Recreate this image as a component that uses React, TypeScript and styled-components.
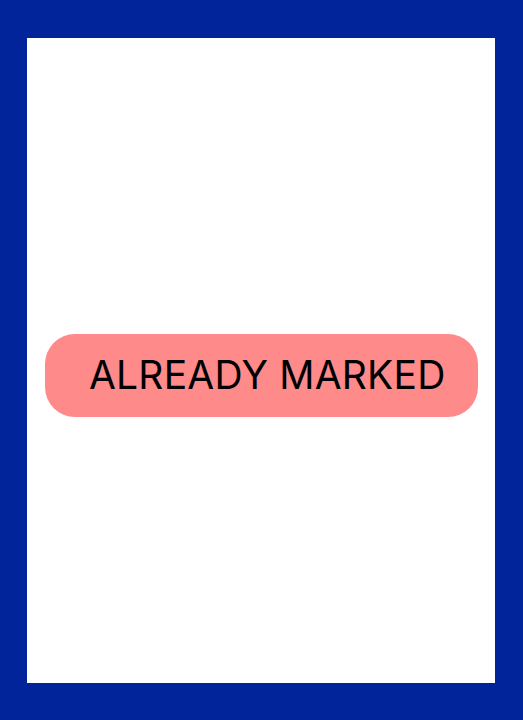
import React from "react";
import styled, { createGlobalStyle } from "styled-components";

const Global = createGlobalStyle`
  html, body { margin: 0; padding: 0; }
  body { background: #02249a; font-family: Inter, "Noto Sans", sans-serif; }
`;

const Frame = styled.div`
  box-sizing: border-box;
  width: 523px;
  height: 720px;
  padding: 38px 28px 37px 27px;
  background: #02249a;
`;

const Panel = styled.div`
  box-sizing: border-box;
  height: 100%;
  background: #ffffff;
  padding: 296px 17px 0 18px;
`;

const Pill = styled.div`
  box-sizing: border-box;
  height: 83px;
  border-radius: 30px;
  background: #ff8a8a;
  display: flex;
  align-items: center;
  padding-left: 44px;
`;

const Label = styled.span`
  font-family: Inter, "Noto Sans", sans-serif;
  font-size: 39px;
  font-weight: 400;
  letter-spacing: 0.2px;
  color: #000;
  line-height: 1;
  padding-bottom: 3px;
`;

export default function App() {
  return (
    <>
      <Global />
      <Frame>
        <Panel>
          <Pill>
            <Label>ALREADY MARKED</Label>
          </Pill>
        </Panel>
      </Frame>
    </>
  );
}
